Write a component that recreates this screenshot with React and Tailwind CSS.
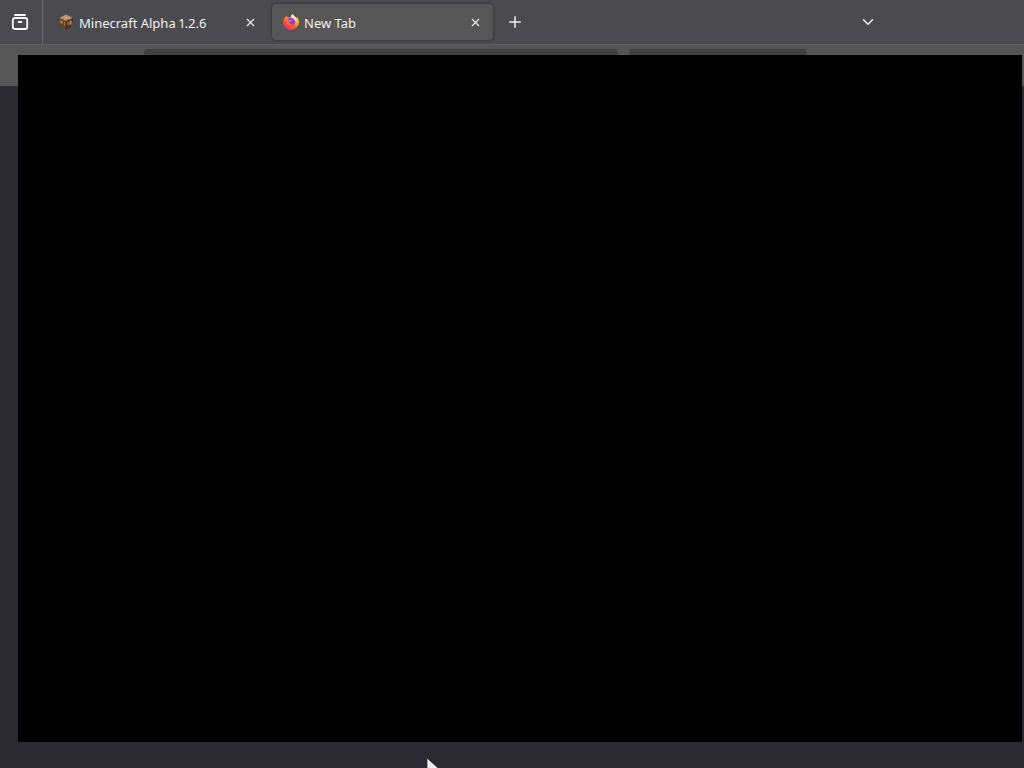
import React from 'react';
import { ChevronDown, Plus, X } from 'lucide-react';

const ArchiveIcon = () => (
  <svg width="18" height="18" viewBox="0 0 18 18" fill="none" stroke="#fbfbfe" strokeWidth="1.8" strokeLinecap="round">
    <path d="M4 2h10" />
    <rect x="1.8" y="5" width="14.4" height="11" rx="2" />
    <path d="M7.6 9h2.8" />
  </svg>
);

const CraftingTableIcon = () => (
  <svg width="16" height="16" viewBox="0 0 16 16">
    <path d="M1 4l7-3.500 7 3.500-7 3z" fill="#c4875a" />
    <path d="M4 3.800l4-1.700L12 3.800 8 5.500z" fill="#d39a72" />
    <path d="M1 4l7 3v9l-2-1v-5l-1-.5v4.500l-1-.5V9L3 8.500V13l-2-1z" fill="#5e4226" />
    <path d="M15 4L8 7v9l2-1v-4l1-.5v4l2-1V9l2-1z" fill="#4a2e1a" />
    <path d="M2.500 6l2 1v3l-2-1zM13.500 6l-2 1v4l2-1z" fill="#b58a58" />
    <path d="M6 7.500l1 .5v4l-1-.5zM9 8l1.500-.5v3L9 11z" fill="#a06f3c" />
  </svg>
);

const FirefoxIcon = () => (
  <svg width="16" height="16" viewBox="0 0 16 16">
    <defs>
      <linearGradient id="flame" x1="0.85" y1="0.1" x2="0.2" y2="0.95">
        <stop offset="0" stopColor="#fff36b" />
        <stop offset="0.35" stopColor="#ffa62b" />
        <stop offset="0.65" stopColor="#ff5136" />
        <stop offset="1" stopColor="#f5207c" />
      </linearGradient>
      <linearGradient id="globe" x1="0.7" y1="0" x2="0.3" y2="1">
        <stop offset="0" stopColor="#b14bea" />
        <stop offset="1" stopColor="#5a38c8" />
      </linearGradient>
    </defs>
    <path
      d="M9.500 0c-1 1-1.500 2-1.400 3.200C6.800 3 5.700 3.200 5 3.700 4.200 3.200 4 2.300 4 1.700 2.900 2.300 2.200 3.300 2 4.200 1.700 3.900 1.600 3.400 1.600 3 .6 4.500 0 6.300.1 8.200A7.900 7.900 0 0 0 15.900 8c0-2.200-1-4-2.200-5 .2.700.3 1.300.2 1.800C13.100 2.600 10.500 2.200 9.500 0z"
      fill="url(#flame)"
    />
    <circle cx="8.200" cy="7.500" r="4" fill="url(#globe)" />
    <path d="M2.500 5.500c1.200-.7 2.900-.5 3.700.3.600.6 1.500.6 2.300.8-.1.900-1 1.100-1.700 1.400-.5.300-.4 1.200.4 1.600 1.300.6 2.300-.5 3.300-.1-.8 1.600-2.400 2.300-4 2C3.900 10.800 2.400 8 2.500 5.500z" fill="#ff6a3a" />
    <path d="M9.500 0c-1 1-1.500 2-1.400 3.200 1.700.3 3.300 1.600 3.900 3.500 1-.8 1.400-1.600 1.500-2.700C12.500 2.300 10.500 2.200 9.500 0z" fill="#ffe9a0" />
  </svg>
);

const tabs = [
  { title: 'Minecraft Alpha 1.2.6', icon: <CraftingTableIcon />, active: false },
  { title: 'New Tab', icon: <FirefoxIcon />, active: true },
];

const Tab = ({ title, icon, active }) => (
  <div
    className={
      active
        ? 'flex h-9 w-[221px] items-center rounded bg-[#565656] pr-2 pl-[11px] shadow-[0_0_3px_rgba(0,0,0,0.5)]'
        : 'flex h-9 w-[221px] items-center rounded pr-2 pl-[11px]'
    }
  >
    <button role="tab" aria-selected={active} className="flex flex-1 items-center gap-[5px] text-left">
      {icon}
      <span className="pt-0.5 text-[13px] leading-5 whitespace-nowrap proportional-nums">{title}</span>
    </button>
    <button aria-label={`Close ${title}`} className="flex h-5 w-5 items-center justify-center">
      <X size={13} strokeWidth={2} />
    </button>
  </div>
);

const TabBar = () => (
  <header className="flex h-11 shrink-0 items-center bg-[#4a4a4f]">
    <button aria-label="Recent browsing" className="flex h-11 w-[43px] items-center justify-center border-r border-[#68686c] pr-0.5">
      <ArchiveIcon />
    </button>
    <div role="tablist" className="flex gap-1 pl-1">
      {tabs.map((tab) => (
        <Tab key={tab.title} {...tab} />
      ))}
    </div>
    <button aria-label="Open a new tab" className="ml-3 flex h-5 w-5 items-center justify-center">
      <Plus size={18} strokeWidth={2} />
    </button>
    <button aria-label="List all tabs" className="mr-[146px] ml-auto flex h-5 w-5 items-center justify-center">
      <ChevronDown size={18} strokeWidth={2} />
    </button>
  </header>
);

const Toolbar = () => (
  <div className="flex h-[42px] shrink-0 gap-[11px] border-t border-[#5e5e5e] bg-[#565656] pt-1 pr-[217px] pb-[5px] pl-36">
    <input aria-label="Address" className="min-w-0 flex-1 rounded bg-[#404041]" />
    <input aria-label="Search" className="w-[178px] rounded bg-[#404041]" />
  </div>
);

const Pointer = () => (
  <svg className="absolute bottom-0 left-[426px]" width="14" height="10" viewBox="0 0 14 10">
    <path d="M1 0v16l4-4 8-1z" fill="#eeeeef" stroke="#1c1b22" strokeWidth="0.6" />
  </svg>
);

const App = () => {
  return (
    <div className="relative flex h-screen flex-col overflow-hidden bg-[#2b2a33] font-['Noto_Sans',sans-serif] text-[#f0f0f3]">
      <TabBar />
      <Toolbar />
      <main className="flex-1" />
      {/* Blank window lying over the browser */}
      <div className="absolute top-[55px] right-0.5 bottom-[26px] left-[18px] bg-black" />
      <Pointer />
    </div>
  );
};

export default App;
